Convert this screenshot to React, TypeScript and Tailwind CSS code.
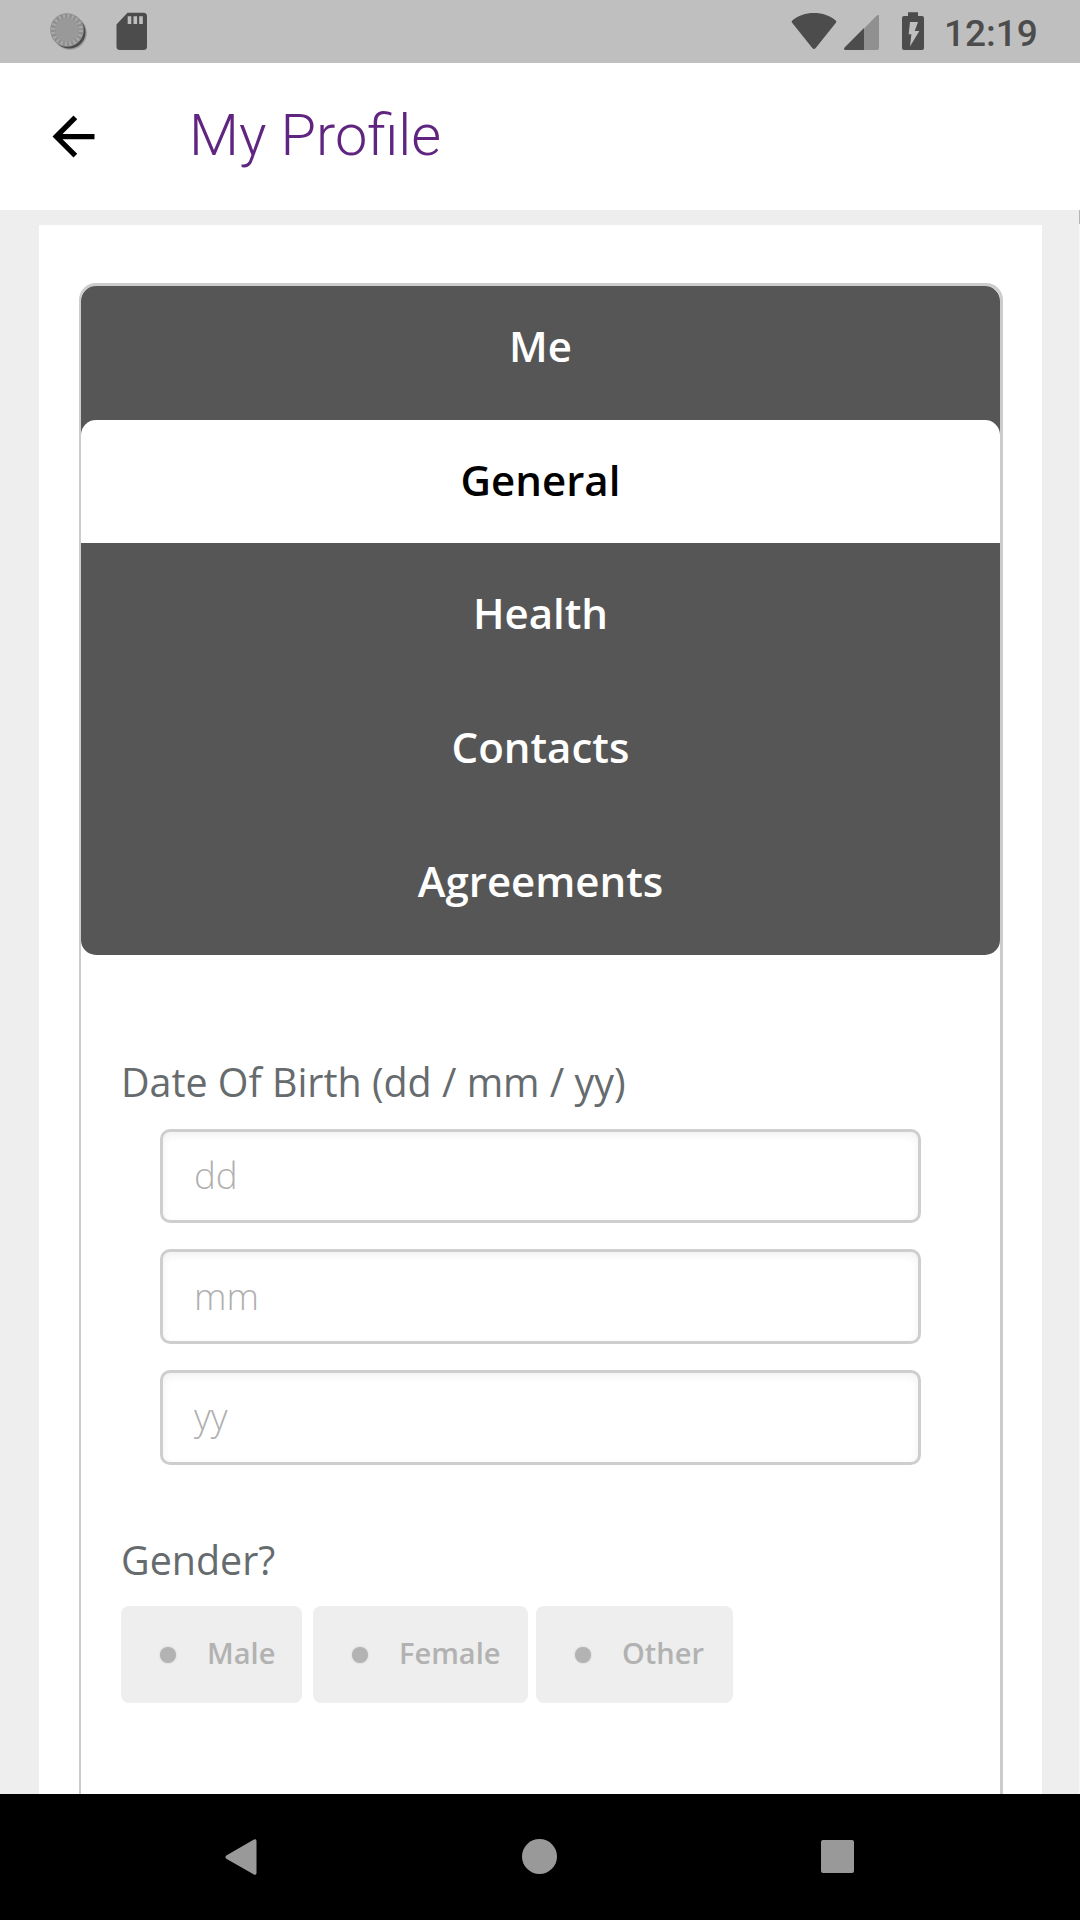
import React, { useState } from "react";

const tabs = ["Me", "General", "Health", "Contacts", "Agreements"];
const dateFields = ["dd", "mm", "yy"];
const genders = [
  { label: "Male", className: "w-[181px] mr-[11px]" },
  { label: "Female", className: "w-[215px] mr-2" },
  { label: "Other", className: "w-[197px]" },
];

const StatusBar = () => {
  return (
    <div className="flex h-[63px] bg-[#bfbfbf] text-[#4c4c4c]">
      <svg className="ml-12 h-[63px] w-11" viewBox="0 0 44 63">
        <circle cx="22" cy="33" r="16.8" fill="#4a4a4a" opacity="0.3" />
        <circle cx="21.2" cy="32.2" r="16.3" fill="#4a4a4a" />
        <circle cx="19" cy="30" r="16.8" fill="#8f8f8f" />
        <circle
          cx="19"
          cy="30"
          r="14"
          fill="none"
          stroke="#a9a9a9"
          strokeWidth="4"
          strokeDasharray="2 2.398"
        />
        <circle cx="19" cy="30" r="12" fill="#999999" />
      </svg>
      <svg className="ml-6 h-[63px] w-8" viewBox="0 0 32 63">
        <path
          fill="currentColor"
          d="M11.5 12.700H27.500a3.500 3.500 0 0 1 3.500 3.500V46.500a3.500 3.500 0 0 1-3.500 3.500H4a3.500 3.500 0 0 1-3.500-3.500V24.500z"
        />
        <path fill="#bfbfbf" d="M11.700 16.300h3.600v7.700h-3.600zM17.500 16.300h3.600v7.700h-3.600zM23.200 16.300h3.600v7.700h-3.600z" />
      </svg>
      <svg className="ml-auto h-[63px] w-[46px]" viewBox="0 0 46 63">
        <path
          fill="currentColor"
          d="M1.300 20.500C7 15.600 14.500 13 23 13s16 2.600 21.700 7.500c.8.700.8 1.400.2 2.200L24.700 48c-1 1.200-2.400 1.200-3.400 0L1.100 22.700c-.6-.8-.6-1.500.2-2.200z"
        />
      </svg>
      <svg className="ml-[7px] h-[63px] w-9" viewBox="0 0 36 63">
        <path fill="#909090" d="M20 28.500 32.800 15.600c1-1 2.200-.6 2.200.8V48a2 2 0 0 1-2 2H20z" />
        <path fill="currentColor" d="M20 28V50H1.500C-.2 50-.5 48.500.6 47.400z" />
      </svg>
      <svg className="ml-[22px] h-[63px] w-[22px]" viewBox="0 0 22 63">
        <path
          fill="currentColor"
          d="M6 12.300h10V16h4a2 2 0 0 1 2 2V48a2 2 0 0 1-2 2H2a2 2 0 0 1-2-2V18a2 2 0 0 1 2-2h4z"
        />
        <path fill="#bfbfbf" d="M8 22h8l-3.300 9H17.300L8 46.500 9.400 34.300H6.700z" />
      </svg>
      <span className="ml-5 mr-[42px] w-[94px] whitespace-nowrap pt-[2px] font-['Roboto'] text-[37px] font-medium leading-[63px]">
        12:19
      </span>
    </div>
  );
};

const NavBar = () => {
  return (
    <div className="flex h-[126px] items-center bg-black pb-px text-[#999999]">
      <svg className="ml-[225px] h-9 w-8" viewBox="0 0 32 36">
        <path fill="currentColor" d="M28.500.7c1.300-1 3-.5 3 1.300V34c0 1.800-1.700 2.300-3 1.300L1.300 19.700c-1.200-.9-1.200-2.300 0-3.200z" />
      </svg>
      <div className="ml-[265px] size-[35px] rounded-full bg-[#999999]" />
      <div className="ml-[264px] size-[33px] rounded-xs bg-[#999999]" />
    </div>
  );
};

const App = () => {
  const [active, setActive] = useState("General");
  const [gender, setGender] = useState("");

  return (
    <div className="flex h-[1920px] w-[1080px] flex-col overflow-hidden bg-[#eeeeee] font-['Open_Sans',sans-serif]">
      <StatusBar />
      <header className="flex h-[147px] items-center bg-white">
        <svg className="ml-[42px] size-[63px]" viewBox="0 0 24 24">
          <path d="M20 11H7.830l5.590-5.590L12 4l-8 8 8 8 1.410-1.410L7.830 13H20v-2z" />
        </svg>
        <h1 className="ml-[84px] pb-px font-['Roboto'] text-[57.750px] font-light leading-none text-[#5f2580]">
          My Profile
        </h1>
      </header>

      <main className="flex min-h-0 flex-1 overflow-hidden">
        <div className="ml-[39px] mt-[15px] h-[1800px] w-[1003px] bg-white pl-10 pt-[58px]">
          <div className="h-[1700px] w-[924px] rounded-[17px] border-[3px] border-l-2 border-[#cccccc]">
            <div className="h-[669px] rounded-[15px] bg-[#565656]">
              {tabs.map((tab) => (
                <button
                  key={tab}
                  onClick={() => setActive(tab)}
                  className={`mb-[10.200px] block h-[123.500px] w-full pb-[3px] text-[42px] font-semibold leading-[120.500px] ${
                    tab === active
                      ? "rounded-t-[15px] bg-white text-black"
                      : "text-white"
                  }`}>
                  {tab}
                </button>
              ))}
            </div>

            <div className="pl-10">
              <p className="mt-[99px] h-[74.500px] text-[39.400px] leading-[56px] text-[#666b6e]">
                Date Of Birth (dd / mm / yy)
              </p>
              <div className="ml-[39px] flex w-[761px] flex-col gap-[26.300px]">
                {dateFields.map((field) => (
                  <input
                    key={field}
                    placeholder={field}
                    className="h-[94.500px] rounded-[10px] border-[3px] border-[#cecece] bg-white px-[31px] pb-[2px] text-[36.750px] font-light shadow-[inset_0_3px_8px_rgba(0,0,0,0.06)] placeholder:text-[#b0b0b0]"
                  />
                ))}
              </div>

              <p className="mt-[67.400px] h-[74px] text-[39.400px] leading-[56px] text-[#666b6e]">
                Gender?
              </p>
              <div className="flex">
                {genders.map(({ label, className }) => (
                  <button
                    key={label}
                    onClick={() => setGender(label)}
                    aria-pressed={gender === label}
                    className={`flex h-[97px] items-center rounded-[8px] bg-[#eeeeee] pl-[39px] text-[29px] font-semibold text-[#b2b2b2] ${className}`}>
                    <span className="mr-[31px] mt-[2px] size-4 rounded-full bg-[#b3b3b3] shadow-[0_0_2px_#c4c4c4]" />
                    <span className="pb-[3px]">{label}</span>
                  </button>
                ))}
              </div>
            </div>
          </div>
        </div>
        <div className="ml-auto w-px bg-[#f8f8f8]">
          <div className="h-[14px] bg-[#b5b5b5]" />
        </div>
      </main>
      <NavBar />
    </div>
  );
};

export default App;
